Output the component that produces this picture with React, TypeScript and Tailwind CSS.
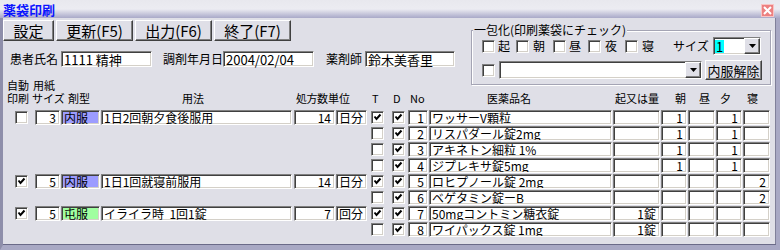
import React from "react";

type LeftRow = {
  auto: boolean;
  size: string;
  form: string;
  formBg: string;
  usage: string;
  qty: string;
  unit: string;
};

type Med = {
  no: number;
  t: boolean;
  name: string;
  amt: string;
  am: string;
  noon: string;
  pm: string;
  bed: string;
  left?: LeftRow;
};

const meds: Med[] = [
  {
    no: 1, t: true, name: "ワッサーV顆粒", amt: "", am: "1", noon: "", pm: "1", bed: "",
    left: { auto: false, size: "3", form: "内服", formBg: "bg-[#9c9cff]", usage: "1日2回朝夕食後服用", qty: "14", unit: "日分" },
  },
  { no: 2, t: false, name: "リスパダール錠2mg", amt: "", am: "1", noon: "", pm: "1", bed: "" },
  { no: 3, t: false, name: "アキネトン細粒 1%", amt: "", am: "1", noon: "", pm: "1", bed: "" },
  { no: 4, t: false, name: "ジプレキサ錠5mg", amt: "", am: "1", noon: "", pm: "1", bed: "" },
  {
    no: 5, t: true, name: "ロヒプノール錠 2mg", amt: "", am: "", noon: "", pm: "", bed: "2",
    left: { auto: true, size: "5", form: "内服", formBg: "bg-[#9c9cff]", usage: "1日1回就寝前服用", qty: "14", unit: "日分" },
  },
  { no: 6, t: false, name: "ベゲタミン錠ーB", amt: "", am: "", noon: "", pm: "", bed: "2" },
  {
    no: 7, t: true, name: "50mgコントミン糖衣錠", amt: "1錠", am: "", noon: "", pm: "", bed: "",
    left: { auto: true, size: "5", form: "屯服", formBg: "bg-[#a0ffa0]", usage: "イライラ時  1回1錠", qty: "7", unit: "回分" },
  },
  { no: 8, t: false, name: "ワイパックス錠 1mg", amt: "1錠", am: "", noon: "", pm: "", bed: "" },
];

const sunken =
  "border border-t-[#808080] border-l-[#808080] border-r-white border-b-white shadow-[inset_1px_1px_0_#404040,inset_-1px_-1px_0_#d4d0c8]";
const raised =
  "border border-t-white border-l-white border-r-[#404040] border-b-[#404040] shadow-[inset_-1px_-1px_0_#808080]";

function Check({ on, className = "" }: { on?: boolean; className?: string }) {
  return (
    <div className={`w-[13px] h-[13px] shrink-0 bg-white flex items-center justify-center ${sunken} ${className}`}>
      {on && (
        <svg width="9" height="9" viewBox="0 0 9 9">
          <path d="M1.5 3.5 L3.5 6 L7.5 1.5" stroke="#000" strokeWidth="2" fill="none" />
        </svg>
      )}
    </div>
  );
}

function Cell({ w, className = "", right, children }: { w: string; className?: string; right?: boolean; children?: React.ReactNode }) {
  return (
    <div
      className={`${w} h-[15px] shrink-0 flex items-center overflow-hidden whitespace-pre text-[12px] leading-none ${
        right ? "justify-end pr-[3px]" : "pl-[2px]"
      } ${sunken} ${className || "bg-white"}`}
    >
      {children}
    </div>
  );
}

function Btn({ w, children }: { w: string; children: React.ReactNode }) {
  return (
    <div className={`${w} h-[21px] flex items-center justify-center text-[15px] leading-none bg-[#dfdfe7] ${raised}`}>
      {children}
    </div>
  );
}

function Arrow() {
  return (
    <div className={`w-[16px] h-full flex items-center justify-center bg-[#dfdfe7] ${raised}`}>
      <svg width="7" height="4" viewBox="0 0 7 4">
        <path d="M0 0 H7 L3.5 4 Z" fill="#000" />
      </svg>
    </div>
  );
}

export default function App() {
  return (
    <div className="w-[780px] h-[250px] flex flex-col bg-[#a8a8c4] font-['Noto_Sans_CJK_JP','Noto_Sans',sans-serif] text-black">
      {/* title */}
      <div className="h-[18px] shrink-0 flex items-center justify-between pl-[3px] pr-[6px] bg-gradient-to-b from-[#e8e8ee] via-[#ececf2] to-[#a9a9c8]">
        <span className="text-[13px] font-bold leading-none text-[#0a14ff]">薬袋印刷</span>
        <div className="w-[13px] h-[13px] mt-[2px] flex items-center justify-center bg-[#ec8080] border border-[#f8c4c4]">
          <svg width="9" height="9" viewBox="0 0 9 9">
            <path d="M1 1 L8 8 M8 1 L1 8" stroke="#fff" strokeWidth="2" />
          </svg>
        </div>
      </div>

      {/* body */}
      <div className="flex-1 flex flex-col bg-[#dfdfe7] border-l-[3px] border-r-[4px] border-b-[5px] border-l-[#8e8eaa] border-r-[#a8a8c4] border-b-[#a8a8c4] shadow-[inset_0_-1px_0_#6a6a88,inset_-1px_0_0_#80809a]">
        <div className="flex">
          <div className="w-[468px] flex flex-col">
            <div className="flex gap-[2px] mt-[2px]">
              <Btn w="w-[51px]">設定</Btn>
              <Btn w="w-[77px]">更新(F5)</Btn>
              <Btn w="w-[77px]">出力(F6)</Btn>
              <Btn w="w-[77px]">終了(F7)</Btn>
            </div>
            <div className="flex items-center h-[16px] mt-[10px] text-[12px] leading-none">
              <span className="ml-[7px] w-[51px]">患者氏名</span>
              <div className={`w-[91px] h-[16px] bg-white pl-[2px] flex items-center text-[13px] whitespace-pre ${sunken}`}>1111 精神</div>
              <span className="ml-[11px] w-[60px]">調剤年月日</span>
              <div className={`w-[91px] h-[16px] bg-white pl-[2px] flex items-center text-[13px] ${sunken}`}>2004/02/04</div>
              <span className="ml-[12px] w-[39px]">薬剤師</span>
              <div className={`w-[90px] h-[16px] bg-white pl-[2px] flex items-center text-[13px] ${sunken}`}>鈴木美香里</div>
            </div>
            <div className="flex mt-[13px] h-[11px] text-[11px] leading-[11px]">
              <span className="ml-[4px] w-[26px]">自動</span>
              <span>用紙</span>
            </div>
          </div>

          {/* group box */}
          <div className="relative mt-[12px] w-[300px] h-[55px] border border-[#a4a4b4] shadow-[inset_1px_1px_0_#fff,1px_1px_0_#fff] text-[12px] leading-none">
            <span className="absolute left-[1px] -top-[7px] px-[1px] bg-[#dfdfe7] whitespace-nowrap">一包化(印刷薬袋にチェック)</span>
            <div className="flex items-center h-[18px] mt-[6px]">
              <Check className="ml-[10px]" />
              <span className="ml-[3px]">起</span>
              <Check className="ml-[6px]" />
              <span className="ml-[4px]">朝</span>
              <Check className="ml-[8px]" />
              <span className="ml-[3px]">昼</span>
              <Check className="ml-[7px]" />
              <span className="ml-[4px]">夜</span>
              <Check className="ml-[8px]" />
              <span className="ml-[4px]">寝</span>
              <span className="ml-[19px] w-[40px]">サイズ</span>
              <div className={`w-[48px] h-[18px] bg-white flex items-center justify-between pl-[1px] ${sunken}`}>
                <span className="bg-[#00ffff] text-[13px] leading-none px-[1px]">1</span>
                <Arrow />
              </div>
            </div>
            <div className="flex items-center h-[18px] mt-[6px]">
              <Check className="ml-[10px]" />
              <div className={`ml-[4px] w-[203px] h-[18px] bg-white flex justify-end ${sunken}`}>
                <Arrow />
              </div>
              <div className={`ml-[3px] w-[57px] h-[20px] flex items-center justify-center text-[13px] leading-none bg-[#dfdfe7] ${raised}`}>
                内服解除
              </div>
            </div>
          </div>
        </div>

        {/* header */}
        <div className="flex mt-[2px] h-[11px] text-[11px] leading-[11px] whitespace-nowrap">
          <span className="ml-[4px] w-[25px]">印刷</span>
          <span className="w-[36px]">サイズ</span>
          <span className="w-[114px]">剤型</span>
          <span className="w-[114px]">用法</span>
          <span className="w-[32px] tracking-[-0.5px]">処方数</span>
          <span className="w-[44px]">単位</span>
          <span className="w-[21px]">T</span>
          <span className="w-[17px]">D</span>
          <span className="w-[77px]">No</span>
          <span className="w-[128px]">医薬品名</span>
          <span className="w-[60px]">起又は量</span>
          <span className="w-[24px]">朝</span>
          <span className="w-[21px]">昼</span>
          <span className="w-[27px]">夕</span>
          <span>寝</span>
        </div>

        {/* rows */}
        <div className="flex flex-col mt-[6px]">
          {meds.map((m) => (
            <div key={m.no} className="flex items-center h-[15px] mb-[1px]">
              <div className="w-[364px] shrink-0 flex items-center">
                {m.left && (
                  <>
                    <Check on={m.left.auto} className="ml-[12px]" />
                    <Cell w="w-[25px] ml-[7px]" right>{m.left.size}</Cell>
                    <Cell w="w-[39px] ml-[1px]" className={m.left.formBg}>{m.left.form}</Cell>
                    <Cell w="w-[191px] ml-[1px]">{m.left.usage}</Cell>
                    <Cell w="w-[41px] ml-[2px]" right>{m.left.qty}</Cell>
                    <Cell w="w-[31px] ml-[1px]">{m.left.unit}</Cell>
                  </>
                )}
              </div>
              <Check on={m.t} className="ml-[4px]" />
              <Check on className="ml-[8px]" />
              <Cell w="w-[20px] ml-[3px]" right>{m.no}</Cell>
              <Cell w="w-[183px] ml-[1px]">{m.name}</Cell>
              <Cell w="w-[47px] ml-[1px]" right>{m.amt}</Cell>
              <Cell w="w-[26px] ml-[1px]" right>{m.am}</Cell>
              <Cell w="w-[27px] ml-[1px]" right>{m.noon}</Cell>
              <Cell w="w-[26px] ml-[1px]" right>{m.pm}</Cell>
              <Cell w="w-[27px] ml-[1px]" right>{m.bed}</Cell>
            </div>
          ))}
        </div>
      </div>
    </div>
  );
}
